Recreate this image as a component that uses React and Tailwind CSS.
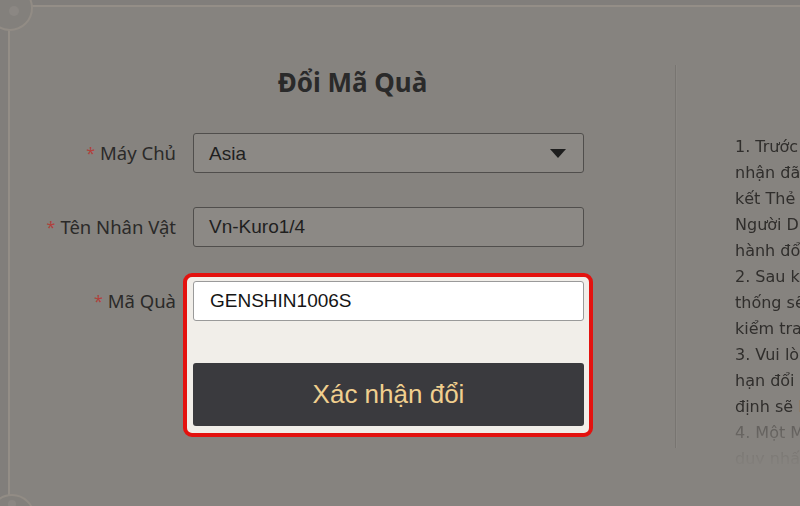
import React from "react";

const lines = [
  "1. Trước khi đổi mã vui lòng xác",
  "nhận đã tạo nhân vật và liên",
  "kết Thẻ Hành Trình và Trung Tâm",
  "Người Dùng trước khi tiến",
  "hành đổi mã.",
  "2. Sau khi đổi mã thành công, hệ",
  "thống sẽ gửi quà vào thư, vui lòng",
  "kiểm tra trong trò chơi.",
  "3. Vui lòng chú ý thời",
  "hạn đổi mã, mã hết hạn theo quy",
];

function Label({ children }) {
  return (
    <div className="w-[166px] h-[40px] flex items-center justify-end text-[18.5px] text-[#2b2a29] whitespace-nowrap">
      <span className="text-[#b0413c] mr-[5px] text-[16px]">*</span>
      {children}
    </div>
  );
}

export default function App() {
  return (
    <div
      className="relative w-[800px] h-[506px] overflow-hidden bg-[#817e7b]"
      style={{ fontFamily: '"Noto Sans", "DejaVu Sans", sans-serif' }}
    >
      <div className="mt-[5px] ml-[8px] h-[501px] border-t-2 border-l-2 border-[#948e87] bg-[#86837f] flex">
        {/* Left form */}
        <div className="w-[665px] shrink-0 flex flex-col">
          <div className="mt-[57px] pl-[20px] text-center text-[26px] leading-[36px] font-bold text-[#2a2a2a]">
            Đổi Mã Quà
          </div>

          <div className="mt-[33px] flex items-start gap-[17px]">
            <Label>Máy Chủ</Label>
            <div className="w-[391px] h-[40px] rounded-[3px] border border-[#504e4c] bg-[#8c8985] flex items-center justify-between pl-[15px] pr-[17px]">
              <span className="text-[19px] text-[#1f1f1f] pt-[2px]" style={{ fontFamily: '"Liberation Sans", Arial, sans-serif' }}>Asia</span>
              <svg width="16" height="9" viewBox="0 0 16 9">
                <path d="M0 0 L16 0 L8 9 Z" fill="#1e1e1e" />
              </svg>
            </div>
          </div>

          <div className="mt-[34px] flex items-start gap-[17px]">
            <Label>Tên Nhân Vật</Label>
            <div className="w-[391px] h-[40px] rounded-[3px] border border-[#504e4c] bg-[#8c8985] flex items-center pl-[15px]">
              <span className="text-[19px] text-[#1f1f1f]" style={{ fontFamily: '"Liberation Sans", Arial, sans-serif' }}>Vn-Kuro1/4</span>
            </div>
          </div>

          <div className="mt-[34px] flex items-start gap-[17px]">
            <Label>Mã Quà</Label>
            <div className="-ml-[10px] -mt-[8px] w-[410px] rounded-[9px] border-4 border-[#e3120f] bg-[#f1eee9] pl-[6px] pr-[5px] pt-[4px] pb-[7px] flex flex-col">
              <div className="w-[391px] h-[40px] rounded-[3px] border border-[#9a9a9a] bg-white flex items-center pl-[16px]">
                <span className="text-[19px] text-[#151515]" style={{ fontFamily: '"Liberation Sans", Arial, sans-serif' }}>GENSHIN1006S</span>
              </div>
              <div className="mt-[42px] w-[391px] h-[63px] rounded-[3px] bg-[#3a3a3e] flex items-center justify-center">
                <span className="text-[26px] text-[#f0cf8e]" style={{ fontFamily: '"Liberation Sans", Arial, sans-serif' }}>Xác nhận đổi</span>
              </div>
            </div>
          </div>
        </div>

        {/* Divider */}
        <div className="mt-[58px] h-[383px] w-[2px] shrink-0 border-l border-[#787571] bg-[#8a8783]" />

        {/* Right notes */}
        <div
          className="ml-[58px] mt-[127px] w-[320px] h-[330px] shrink-0 overflow-hidden text-[16px] leading-[26px] text-[#302e2c] whitespace-nowrap [mask-image:linear-gradient(to_bottom,black_0px,black_296px,transparent_336px)]"
          style={{ fontFamily: '"DejaVu Sans", Verdana, sans-serif' }}
        >
          {lines.map((l) => (
            <div key={l}>{l}</div>
          ))}
          <div>
            định sẽ <span className="text-[#a2703c]">không thể sử dụng.</span>
          </div>
          <div className="text-[#64615e]">4. Một Mã Quà chỉ có thể đổi</div>
          <div className="text-[#6f6c68]">duy nhất một lần.</div>
        </div>
      </div>

      {/* Corner ornaments */}
      <svg className="absolute left-0 top-0" width="40" height="36" viewBox="0 0 40 36">
        <circle cx="10" cy="8" r="22" fill="#83807c" stroke="#928c85" strokeWidth="2" />
        <circle cx="14" cy="11" r="5" fill="#8b8783" />
      </svg>
      <svg className="absolute left-0 bottom-0" width="40" height="22" viewBox="0 0 40 22">
        <circle cx="12" cy="33" r="22" fill="#83807c" stroke="#928c85" strokeWidth="2" />
        <circle cx="12" cy="20" r="4" fill="#8b8783" />
      </svg>
    </div>
  );
}
